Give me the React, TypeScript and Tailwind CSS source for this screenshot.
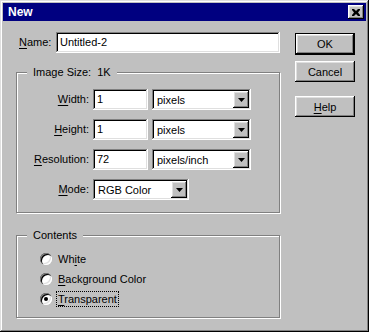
import type { ReactNode } from 'react'

const raised = 'shadow-[inset_-1px_-1px_#000,inset_1px_1px_#fff,inset_-2px_-2px_#808080,inset_2px_2px_#dfdfdf]'
const sunken = 'shadow-[inset_-1px_-1px_#fff,inset_1px_1px_#808080,inset_-2px_-2px_#dfdfdf,inset_2px_2px_#000]'

function U({ children }: { children: ReactNode }) {
  return <span className="underline underline-offset-[2px]">{children}</span>
}

function Field({ value, w }: { value: string; w: string }) {
  return <div className={`${w} h-[21px] bg-white ${sunken} pl-[4px] pt-[3px] leading-[14px]`}>{value}</div>
}

function Select({ value, w }: { value: string; w: string }) {
  return (
    <div className={`${w} h-[21px] bg-white ${sunken} flex items-center justify-between p-[2px]`}>
      <span className="pl-[3px] leading-[14px]">{value}</span>
      <span className={`w-[16px] h-[17px] bg-[#c0c0c0] ${raised} flex items-center justify-center`}>
        <svg width="7" height="4" viewBox="0 0 7 4">
          <path d="M0 0h7L3.5 4z" fill="#000" />
        </svg>
      </span>
    </div>
  )
}

function Row({ label, children }: { label: ReactNode; children: ReactNode }) {
  return (
    <div className="flex items-center h-[21px]">
      <span className="w-[72px] text-right">{label}</span>
      <div className="ml-[4px] flex gap-[4px]">{children}</div>
    </div>
  )
}

function Group({ title, h, children }: { title: string; h: string; children: ReactNode }) {
  return (
    <div className={`relative ${h} border border-[#808080] shadow-[inset_1px_1px_#fff,1px_1px_#fff]`}>
      <span className="absolute left-[10px] top-[-8px] bg-[#c0c0c0] px-[6px] leading-[14px] whitespace-pre">{title}</span>
      {children}
    </div>
  )
}

function Radio({ label, checked, focus }: { label: ReactNode; checked?: boolean; focus?: boolean }) {
  return (
    <div className="flex items-center h-[20px]">
      <span className="relative w-[12px] h-[12px] rounded-full bg-white shadow-[inset_1px_1px_#808080,inset_2px_2px_#000,inset_-1px_-1px_#fff,inset_-2px_-2px_#dfdfdf] flex items-center justify-center">
        {checked && <span className="w-[4px] h-[4px] rounded-full bg-black" />}
      </span>
      <span className={`ml-[5px] px-[1px] leading-[14px] ${focus ? 'outline outline-1 outline-dotted outline-black' : ''}`}>{label}</span>
    </div>
  )
}

function Button({ children, def }: { children: ReactNode; def?: boolean }) {
  return (
    <div className={def ? 'border border-black' : ''}>
      <div className={`${def ? 'h-[20px]' : 'h-[21px]'} bg-[#c0c0c0] ${raised} flex items-center justify-center leading-[14px]`}>
        {children}
      </div>
    </div>
  )
}

export default function App() {
  return (
    <div className="w-[369px] h-[332px] bg-[#c0c0c0] p-[3px] flex flex-col text-[11px] text-black shadow-[inset_-1px_-1px_#000,inset_1px_1px_#dfdfdf,inset_-2px_-2px_#808080,inset_2px_2px_#fff] font-['Liberation_Sans',Arial,sans-serif]">
      <div className="h-[18px] bg-[#000080] flex items-center justify-between pl-[5px] pr-[2px]">
        <span className="text-white font-bold text-[12px] leading-[14px]">New</span>
        <span className={`w-[16px] h-[14px] bg-[#c0c0c0] ${raised} flex items-center justify-center`}>
          <svg width="8" height="7" viewBox="0 0 8 7">
            <path d="M0 0h2l2 2 2-2h2v1L6 3.5 8 6v1H6L4 5 2 7H0V6l2-2.5L0 1z" fill="#000" />
          </svg>
        </span>
      </div>
      <div className="flex">
        <div className="ml-[13px] w-[264px]">
          <div className="mt-[11px] flex items-center justify-between">
            <span className="ml-[3px]">
              <U>N</U>ame:
            </span>
            <Field value="Untitled-2" w="w-[224px]" />
          </div>
          <div className="mt-[19px]">
            <Group title="Image Size:  1K" h="h-[141px]">
              <div className="pt-[16px] flex flex-col gap-[9px]">
                <Row label={<><U>W</U>idth:</>}>
                  <Field value="1" w="w-[55px]" />
                  <Select value="pixels" w="w-[99px]" />
                </Row>
                <Row label={<><U>H</U>eight:</>}>
                  <Field value="1" w="w-[55px]" />
                  <Select value="pixels" w="w-[99px]" />
                </Row>
                <Row label={<><U>R</U>esolution:</>}>
                  <Field value="72" w="w-[55px]" />
                  <Select value="pixels/inch" w="w-[99px]" />
                </Row>
                <Row label={<><U>M</U>ode:</>}>
                  <Select value="RGB Color" w="w-[96px]" />
                </Row>
              </div>
            </Group>
          </div>
          <div className="mt-[22px]">
            <Group title="Contents" h="h-[83px]">
              <div className="pt-[13px] pl-[23px] flex flex-col">
                <Radio label={<>Wh<U>i</U>te</>} />
                <Radio label={<><U>B</U>ackground Color</>} />
                <Radio label={<><U>T</U>ransparent</>} checked focus />
              </div>
            </Group>
          </div>
        </div>
        <div className="ml-[15px] w-[60px] flex flex-col">
          <div className="mt-[12px]">
            <Button def>OK</Button>
          </div>
          <div className="mt-[6px]">
            <Button>Cancel</Button>
          </div>
          <div className="mt-[14px]">
            <Button>
              <span>
                <U>H</U>elp
              </span>
            </Button>
          </div>
        </div>
      </div>
    </div>
  )
}
